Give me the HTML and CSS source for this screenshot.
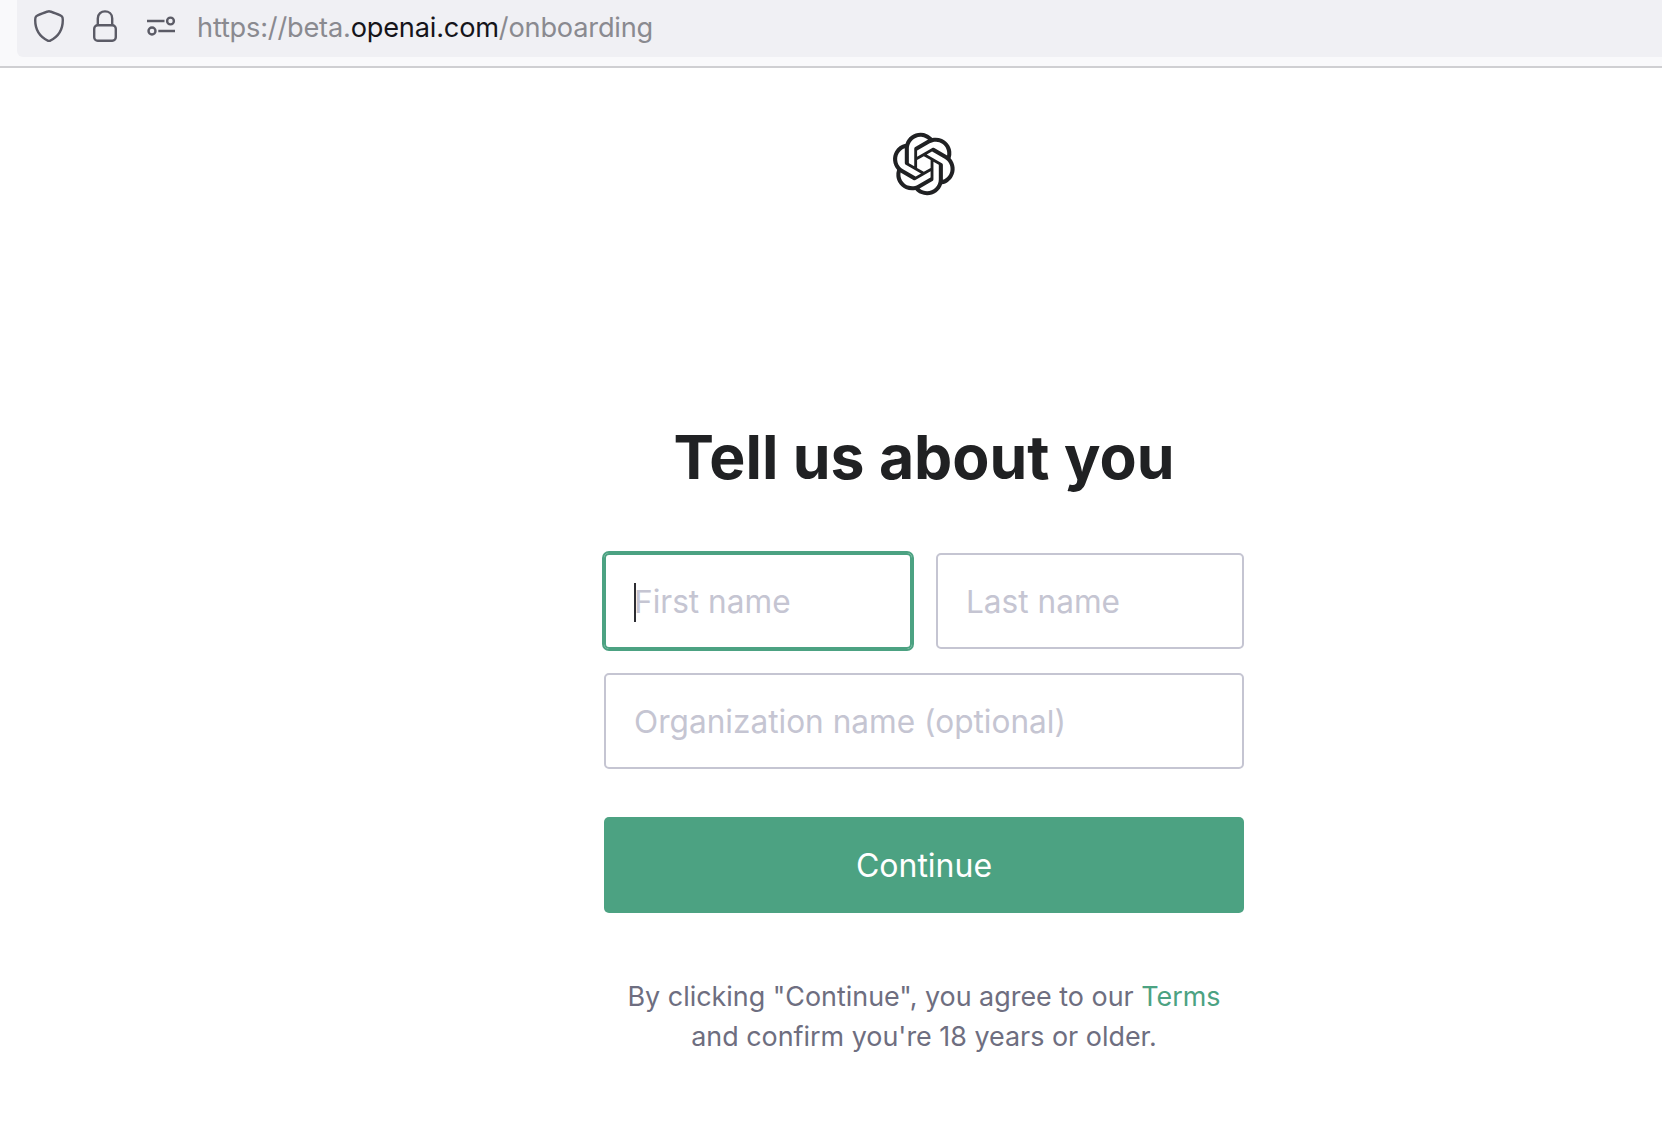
FILE: index.html
```html
<!DOCTYPE html>
<html lang="en">
<head>
<meta charset="utf-8">
<title>Tell us about you</title>
<link rel="stylesheet" href="styles.css">
</head>
<body>
<header class="toolbar">
  <div class="urlbar">
    <svg class="icon shield" viewBox="0 0 30 32" width="30" height="32"><path d="M15 1.2 C16 1.2 27 5 28 6.5 C28.8 7.5 28.8 9 28.8 10 C28.8 20 24 27 15.8 30.8 Q15 31.1 14.2 30.8 C6 27 1.2 20 1.2 10 C1.2 9 1.2 7.5 2 6.5 C3 5 14 1.2 15 1.2 Z"/></svg>
    <svg class="icon lock" viewBox="0 0 24 32" width="24" height="32"><rect x="1.2" y="15.2" width="21.6" height="15.6" rx="3.5"/><path d="M4.8 15.2 V8.5 C4.8 -1 19.2 -1 19.2 8.5 V15.2"/></svg>
    <svg class="icon sliders" viewBox="0 0 29 20" width="29" height="20"><path d="M0 5 H17.5 M11.3 15 H28"/><circle cx="23.5" cy="5" r="3.4"/><circle cx="5" cy="15" r="3.5"/></svg>
    <div class="url"><span class="dim">https://beta.</span><span class="domain">openai.com</span><span class="dim">/onboarding</span></div>
  </div>
</header>
<main class="page">
  <svg class="logo" viewBox="0 0 41 41" width="64" height="64"><path fill="#202123" d="M37.5324 16.8707C37.9808 15.5241 38.1363 14.0974 37.9886 12.6859C37.8409 11.2744 37.3934 9.91076 36.676 8.68622C35.6126 6.83404 33.9882 5.3676 32.0373 4.4985C30.0864 3.62941 27.9098 3.40259 25.8215 3.85078C24.8796 2.7893 23.7219 1.94125 22.4257 1.36341C21.1295 0.785575 19.7249 0.491269 18.3058 0.500197C16.1708 0.495044 14.0893 1.16803 12.3614 2.42214C10.6335 3.67624 9.34853 5.44666 8.6917 7.47815C7.30085 7.76286 5.98686 8.3414 4.8377 9.17505C3.68854 10.0087 2.73073 11.0782 2.02839 12.312C0.956464 14.1591 0.498905 16.2988 0.721698 18.4228C0.944492 20.5467 1.83612 22.5449 3.268 24.1293C2.81966 25.4759 2.66413 26.9026 2.81182 28.3141C2.95951 29.7256 3.40701 31.0892 4.12437 32.3138C5.18791 34.1659 6.8123 35.6322 8.76321 36.5013C10.7141 37.3704 12.8907 37.5973 14.9789 37.1492C15.9208 38.2107 17.0786 39.0587 18.3747 39.6366C19.6709 40.2144 21.0755 40.5087 22.4946 40.4998C24.6307 40.5054 26.7133 39.8321 28.4418 38.5772C30.1704 37.3223 31.4556 35.5506 32.1119 33.5179C33.5027 33.2332 34.8167 32.6547 35.9659 31.821C37.115 30.9874 38.0728 29.9178 38.7752 28.684C39.8458 26.8371 40.3023 24.6979 40.0789 22.5748C39.8556 20.4517 38.9639 18.4544 37.5324 16.8707ZM22.4978 37.8849C20.7443 37.8874 19.0459 37.2733 17.6994 36.1501C17.7601 36.117 17.8666 36.0586 17.936 36.0161L25.9004 31.4156C26.1003 31.3019 26.2663 31.137 26.3813 30.9378C26.4964 30.7386 26.5563 30.5124 26.5549 30.2825V19.0542L29.9213 20.998C29.9389 21.0068 29.9541 21.0198 29.9656 21.0359C29.977 21.052 29.9842 21.0707 29.9867 21.0902V30.3889C29.9842 32.375 29.1946 34.2791 27.7909 35.6841C26.3872 37.0892 24.4838 37.8806 22.4978 37.8849ZM6.39227 31.0064C5.51397 29.4888 5.19742 27.7107 5.49804 25.9832C5.55718 26.0187 5.66048 26.0818 5.73461 26.1244L13.699 30.7248C13.8975 30.8408 14.1233 30.902 14.3532 30.902C14.583 30.902 14.8088 30.8408 15.0073 30.7248L24.731 25.1103V28.9979C24.7321 29.0177 24.7283 29.0376 24.7199 29.0556C24.7115 29.0736 24.6988 29.0893 24.6829 29.1012L16.6317 33.7497C14.9096 34.7416 12.8643 35.0097 10.9447 34.4954C9.02506 33.9811 7.38785 32.7263 6.39227 31.0064ZM4.29707 13.6194C5.17156 12.0998 6.55279 10.9364 8.19885 10.3327C8.19885 10.4013 8.19491 10.5228 8.19491 10.6071V19.808C8.19351 20.0378 8.25334 20.2638 8.36823 20.4629C8.48312 20.6619 8.64893 20.8267 8.84863 20.9404L18.5723 26.5542L15.206 28.4979C15.1894 28.5089 15.1703 28.5155 15.1505 28.5173C15.1307 28.5191 15.1107 28.516 15.0924 28.5082L7.04046 23.8557C5.32135 22.8601 4.06716 21.2235 3.55289 19.3046C3.03862 17.3858 3.30624 15.3413 4.29707 13.6194ZM31.955 20.0556L22.2312 14.4411L25.5976 12.4981C25.6142 12.4872 25.6333 12.4805 25.6531 12.4787C25.6729 12.4769 25.6928 12.4801 25.7111 12.4879L33.7631 17.1364C34.9967 17.849 36.0017 18.8982 36.6606 20.1613C37.3194 21.4244 37.6047 22.849 37.4832 24.2684C37.3617 25.6878 36.8382 27.0432 35.9743 28.1759C35.1103 29.3086 33.9415 30.1717 32.6047 30.6641C32.6047 30.5947 32.6047 30.4733 32.6047 30.3889V21.188C32.6066 20.9586 32.5474 20.7328 32.4332 20.5338C32.319 20.3348 32.154 20.1698 31.955 20.0556ZM35.3055 15.0128C35.2464 14.9765 35.1431 14.9142 35.069 14.8717L27.1045 10.2712C26.906 10.1554 26.6803 10.0943 26.4504 10.0943C26.2206 10.0943 25.9948 10.1554 25.7963 10.2712L16.0726 15.8858V11.9982C16.0715 11.9783 16.0753 11.9585 16.0837 11.9405C16.0921 11.9225 16.1048 11.9068 16.1207 11.8949L24.1719 7.25025C25.4053 6.53903 26.8158 6.19376 28.2383 6.25482C29.6608 6.31589 31.0364 6.78077 32.2044 7.59508C33.3723 8.40939 34.2842 9.53945 34.8334 10.8531C35.3826 12.1667 35.5464 13.6095 35.3055 15.0128ZM14.2424 21.9419L10.8752 19.9981C10.8576 19.9893 10.8423 19.9763 10.8309 19.9602C10.8195 19.9441 10.8122 19.9254 10.8098 19.9058V10.6071C10.8107 9.18295 11.2173 7.78848 11.9819 6.58696C12.7466 5.38544 13.8377 4.42659 15.1275 3.82264C16.4173 3.21869 17.8524 2.99464 19.2649 3.1767C20.6775 3.35876 22.0089 3.93941 23.1034 4.85067C23.0427 4.88379 22.937 4.94215 22.8668 4.98473L14.9024 9.58517C14.7025 9.69878 14.5366 9.86356 14.4215 10.0626C14.3065 10.2616 14.2466 10.4877 14.2479 10.7175L14.2424 21.9419ZM16.071 17.9991L20.4018 15.4978L24.7325 17.9975V22.9985L20.4018 25.4983L16.071 22.9985V17.9991Z"/></svg>
  <h1 class="title">Tell us about you</h1>
  <form class="form">
    <div class="row">
      <div class="field focused"><span class="caret"></span><span class="placeholder">First name</span></div>
      <div class="field"><span class="placeholder">Last name</span></div>
    </div>
    <div class="field"><span class="placeholder">Organization name (optional)</span></div>
    <div class="button">Continue</div>
  </form>
  <p class="terms">By clicking "Continue", you agree to our <span class="link">Terms</span><br>and confirm you're 18 years or older.</p>
</main>
</body>
</html>
```
FILE: styles.css
```css
* { box-sizing: border-box; }
html, body { margin: 0; padding: 0; height: 100%; background: #fff; overflow: hidden; }
body { font-family: Inter, "Liberation Sans", sans-serif; }

.toolbar {
  height: 68px;
  padding: 0 0 9px 17px;
  background: #f9f9fb;
  border-bottom: 2px solid #cfcfd2;
}
.urlbar {
  height: 57px;
  display: flex;
  align-items: center;
  padding: 0 0 5px 17px;
  background: #f0f0f4;
  border-bottom-left-radius: 6px;
}
.icon { fill: none; stroke: #5b5b66; stroke-width: 2.4; flex: none; }
.lock { margin-left: 29px; }
.sliders { margin-left: 30px; }
.url { margin: 3px 0 0 21px; font-size: 27.2px; letter-spacing: -0.2px; white-space: nowrap; }
.dim { color: #8a8a90; }
.domain { color: #15141a; }

/* The column's centre sits right of the window's centre, at x = 924. */
.page { padding-left: 186px; display: flex; flex-direction: column; align-items: center; }
.logo { margin-top: 64px; display: block; }
.title {
  margin: 225px 0 0;
  font-size: 60.7px;
  line-height: 72px;
  font-weight: 700;
  color: #202123;
}
.form { width: 640px; margin-top: 60px; display: flex; flex-direction: column; gap: 24px; }
.row { display: grid; grid-template-columns: 1fr 1fr; gap: 24px; }
.field {
  height: 96px;
  border: 2px solid #c5c5d2;
  border-radius: 5px;
  padding: 0 28px;
  display: flex;
  align-items: center;
  position: relative;
  font-size: 31.6px;
}
.placeholder { color: #c5c5d2; white-space: nowrap; }
.focused { border-color: #4ca282; outline: 2px solid #4ca282; }
.caret {
  position: absolute;
  left: 28px;
  top: 28px;
  width: 2px;
  height: 39px;
  background: #2d2d33;
}
.button {
  height: 96px;
  margin-top: 24px;
  background: #4ca282;
  border-radius: 5px;
  color: #fff;
  font-size: 32px;
  display: flex;
  align-items: center;
  justify-content: center;
}
.terms {
  margin: 63px 0 0;
  text-align: center;
  font-size: 26.9px;
  line-height: 40px;
  color: #6e6e80;
}
.link { color: #4ca282; }
```
